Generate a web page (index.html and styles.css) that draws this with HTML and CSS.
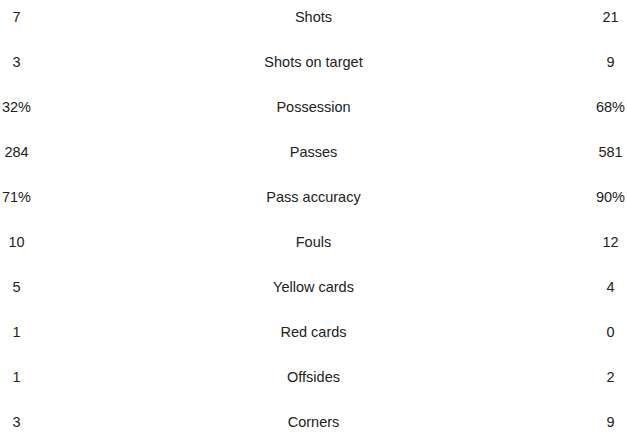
FILE: index.html
```html
<!DOCTYPE html>
<html>
<head>
<meta charset="utf-8">
<link rel="stylesheet" href="styles.css">
</head>
<body>
<div class="stats">
  <div class="row"><span class="home">7</span><span class="label">Shots</span><span class="away">21</span></div>
  <div class="row"><span class="home">3</span><span class="label">Shots on target</span><span class="away">9</span></div>
  <div class="row"><span class="home">32%</span><span class="label">Possession</span><span class="away">68%</span></div>
  <div class="row"><span class="home">284</span><span class="label">Passes</span><span class="away">581</span></div>
  <div class="row"><span class="home">71%</span><span class="label">Pass accuracy</span><span class="away">90%</span></div>
  <div class="row"><span class="home">10</span><span class="label">Fouls</span><span class="away">12</span></div>
  <div class="row"><span class="home">5</span><span class="label">Yellow cards</span><span class="away">4</span></div>
  <div class="row"><span class="home">1</span><span class="label">Red cards</span><span class="away">0</span></div>
  <div class="row"><span class="home">1</span><span class="label">Offsides</span><span class="away">2</span></div>
  <div class="row"><span class="home">3</span><span class="label">Corners</span><span class="away">9</span></div>
</div>
</body>
</html>
```
FILE: styles.css
```css
html, body {
  margin: 0;
  padding: 0;
  background: #fff;
}
body {
  font-family: "Liberation Sans", Arial, sans-serif;
  font-size: 14.5px;
  color: #222;
}
.stats {
  display: flex;
  flex-direction: column;
}
.row {
  display: grid;
  grid-template-columns: 33px 1fr 33px;
  height: 45px;
  box-sizing: border-box;
  padding-top: 9px;
  line-height: 16px;
  text-align: center;
}
.home, .label, .away {
  white-space: nowrap;
  display: flex;
  justify-content: center;
}
```
